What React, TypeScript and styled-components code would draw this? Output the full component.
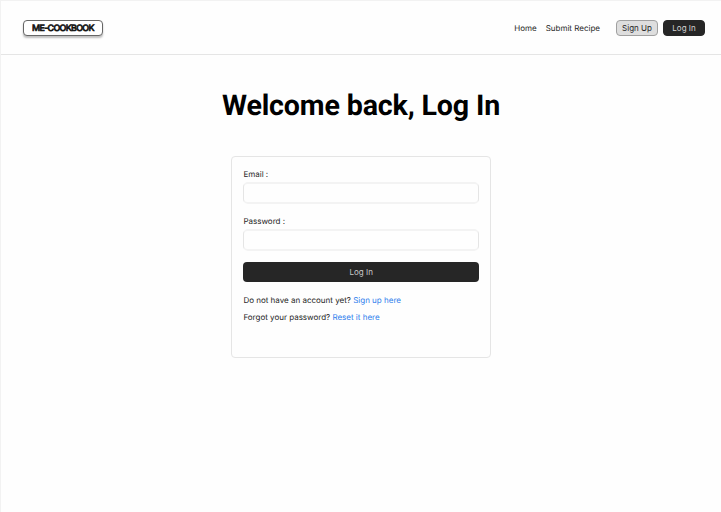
import React from "react";
import styled, { createGlobalStyle } from "styled-components";

const GlobalStyle = createGlobalStyle`
  * { box-sizing: border-box; }
  body {
    margin: 0;
    background: #fefefe;
    color: #262626;
    font-family: Inter, "Liberation Sans", sans-serif;
    font-size: 8px;
    line-height: 12px;
    text-rendering: geometricPrecision;
  }
`;

const Page = styled.div`
  min-height: 100vh;
  border-top: 1px solid #f2f2f2;
  border-left: 1px solid #f2f2f2;
`;

const Header = styled.header`
  display: flex;
  align-items: center;
  justify-content: space-between;
  height: 54px;
  padding: 0 16px 0 22px;
  border-bottom: 1px solid #e5e5e5;
`;

const Logo = styled.a`
  display: flex;
  align-items: center;
  justify-content: center;
  width: 80px;
  height: 16px;
  padding-top: 2px;
  border: 1px solid #666;
  border-radius: 4px;
  background: #fff;
  box-shadow: 0 2px 2px rgba(0, 0, 0, 0.25);
  color: #111;
  font-family: Inter, sans-serif;
  font-size: 8.9px;
  font-weight: 500;
  letter-spacing: -0.68px;
  -webkit-text-stroke: 0.6px #111;
`;

const Nav = styled.nav`
  display: flex;
  align-items: center;
`;

const NavLink = styled.a<{ $gap: number }>`
  margin-right: ${({ $gap }) => $gap}px;
`;

const NavButton = styled.button<{ $dark?: boolean }>`
  width: 42px;
  height: 16px;
  padding: 0;
  border: 1px solid ${({ $dark }) => ($dark ? "#262626" : "#a0a0a0")};
  border-radius: 4px;
  background: ${({ $dark }) => ($dark ? "#262626" : "#dedede")};
  color: ${({ $dark }) => ($dark ? "#d4d4d4" : "#262626")};
  font: inherit;
  & + & { margin-left: 5px; }
`;

const Main = styled.main`
  display: flex;
  flex-direction: column;
  align-items: center;
`;

const Title = styled.h1`
  margin: 32px 0 33px;
  color: #000;
  font: 700 28.6px/36px Roboto, sans-serif;
  letter-spacing: -0.15px;
`;

const Card = styled.form`
  display: flex;
  flex-direction: column;
  width: 260px;
  height: 202px;
  padding: 11px 11px 11px 11.4px;
  border: 1px solid #e5e5e5;
  border-radius: 4px;
`;

const Field = styled.label`
  display: flex;
  flex-direction: column;
  gap: 2px;
  margin-bottom: 11px;
`;

const Input = styled.input`
  width: 100%;
  height: 22px;
  padding: 0 6px;
  border: solid;
  border-width: 2px 1px;
  border-color: #f3f3f3 #e5e5e5;
  border-radius: 5px;
  background: #fefefe;
  font: inherit;
  outline: none;
`;

const Submit = styled.button`
  height: 20px;
  padding: 0;
  border: 0;
  border-radius: 4px;
  background: #262626;
  color: #c9c9c9;
  font: inherit;
`;

const Hint = styled.p<{ $top: number }>`
  margin: ${({ $top }) => $top}px 0 0;
`;

const Link = styled.a`
  color: #2f80ed;
`;

export default function App() {
  return (
    <>
      <GlobalStyle />
      <Page>
        <Header>
          <Logo>ME-COOKBOOK</Logo>
          <Nav>
            <NavLink $gap={9}>Home</NavLink>
            <NavLink $gap={16}>Submit Recipe</NavLink>
            <NavButton>Sign Up</NavButton>
            <NavButton $dark>Log In</NavButton>
          </Nav>
        </Header>
        <Main>
          <Title>Welcome back, Log In</Title>
          <Card>
            <Field>
              Email :
              <Input type="email" />
            </Field>
            <Field>
              Password :
              <Input type="password" />
            </Field>
            <Submit type="button">Log In</Submit>
            <Hint $top={12}>
              Do not have an account yet? <Link>Sign up here</Link>
            </Hint>
            <Hint $top={5}>
              Forgot your password? <Link>Reset it here</Link>
            </Hint>
          </Card>
        </Main>
      </Page>
    </>
  );
}
